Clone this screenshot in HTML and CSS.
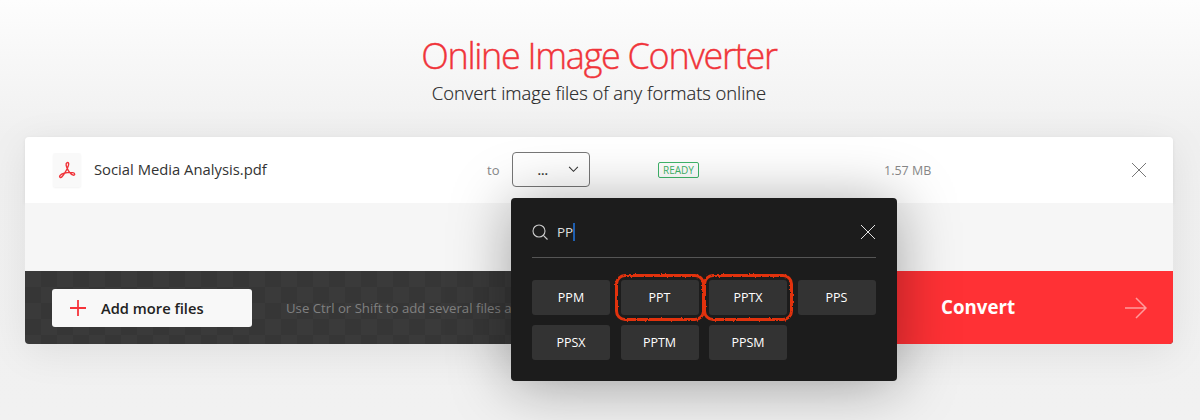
FILE: index.html
```html
<!DOCTYPE html>
<html lang="en">
<head>
    <meta charset="UTF-8">
    <title>Online Image Converter</title>
    <link rel="stylesheet" href="styles.css">
</head>
<body>
    <svg class="defs" width="0" height="0">
        <filter id="rough" x="-10%" y="-10%" width="120%" height="120%">
            <feTurbulence type="fractalNoise" baseFrequency="0.5" numOctaves="2" seed="4"/>
            <feDisplacementMap in="SourceGraphic" scale="2.6"/>
        </filter>
    </svg>

    <header class="intro">
        <h1>Online Image Converter</h1>
        <p>Convert image files of any formats online</p>
    </header>

    <main class="panel">
        <div class="file-row">
            <div class="file-info">
                <span class="file-icon">
                    <svg viewBox="0 0 24 24" width="20" height="20" fill="none" stroke="#f0343a" stroke-width="1.7">
                        <path d="M11 6.5C10.3 2.8 13.8 1.6 14 4.6c.2 3.4-5.4 12.8-8 15.6-1.700 1.800-3.600.2-2.500-1.500 1.600-2.500 9-4.700 15.500-3.500 3 .5 2.700 3.300.4 3-3.400-.5-7.600-7.500-8.400-11.700z"/>
                    </svg>
                </span>
                <span class="file-name">Social Media Analysis.pdf</span>
            </div>
            <div class="target">
                <span class="target-label">to</span>
                <div class="select">
                    <span class="select-value">...</span>
                    <svg viewBox="0 0 12 8" width="11" height="7" fill="none" stroke="#333" stroke-width="1.200"><path d="M1 1l5 5 5-5"/></svg>
                </div>
            </div>
            <div class="status"><span class="badge">READY</span></div>
            <div class="file-size">1.57 MB</div>
            <svg class="close" viewBox="0 0 16 16" width="16" height="16" fill="none" stroke="#777" stroke-width="1"><path d="M1 1l14 14M15 1L1 15"/></svg>
        </div>

        <div class="spacer"></div>

        <div class="action-bar">
            <button class="add-btn">
                <svg viewBox="0 0 16 16" width="16" height="16" fill="none" stroke="#f5333a" stroke-width="1.800"><path d="M8 0v16M0 8h16"/></svg>
                Add more files
            </button>
            <span class="hint">Use Ctrl or Shift to add several files a</span>
            <button class="convert-btn">
                <span class="convert-label">Convert</span>
                <svg viewBox="0 0 22 22" width="22" height="22" fill="none" stroke="#ff9c9c" stroke-width="1.500"><path d="M0 11h21M11 1l10 10-10 10"/></svg>
            </button>
        </div>

        <div class="dropdown">
            <div class="search">
                <svg viewBox="0 0 16 16" width="16" height="16" fill="none" stroke="#ccc" stroke-width="1.100"><circle cx="7" cy="7" r="6"/><path d="M11.300 11.300l4.200 4.200"/></svg>
                <span class="search-text">PP</span><span class="caret"></span>
                <svg class="search-close" viewBox="0 0 16 16" width="16" height="16" fill="none" stroke="#e4e4e4" stroke-width="1"><path d="M1 1l14 14M15 1L1 15"/></svg>
            </div>
            <div class="formats">
                <span class="chip">PPM</span>
                <span class="chip marked">PPT</span>
                <span class="chip marked">PPTX</span>
                <span class="chip">PPS</span>
                <span class="chip">PPSX</span>
                <span class="chip">PPTM</span>
                <span class="chip">PPSM</span>
            </div>
        </div>
    </main>
</body>
</html>
```

FILE: styles.css
```css
* {
    box-sizing: border-box;
}

html, body {
    height: 100%;
}

body {
    margin: 0;
    overflow: hidden;
    font-family: "Open Sans", sans-serif;
    background: linear-gradient(#fdfdfd 0, #f0f0f0 135px, #f1f1f1 100%);
    color: #333;
}

.defs {
    position: absolute;
}

.intro {
    height: 137px;
    padding-top: 33px;
    text-align: center;
}

.intro h1 {
    margin: 0 2px 0 0;
    font-size: 36px;
    font-weight: 300;
    line-height: 46px;
    letter-spacing: -1.300px;
    color: #f0343a;
    -webkit-text-stroke: 0.4px #f0343a;
}

.intro p {
    margin: -1px 2px 0 0;
    font-size: 18.400px;
    font-weight: 300;
    line-height: 30px;
    letter-spacing: -0.050px;
    color: #222;
    -webkit-text-stroke: 0.15px #222;
}

.panel {
    position: relative;
    width: 1148px;
    margin-left: 25px;
    border-radius: 4px;
    box-shadow: 0 8px 40px rgba(0, 0, 0, 0.08);
}

.file-row {
    display: grid;
    grid-template-columns: 435px 171px 226px 247px 16px;
    align-items: center;
    height: 66px;
    padding-left: 27px;
    background: #fff;
    border-radius: 4px 4px 0 0;
    box-shadow: 0 1px 4px rgba(0, 0, 0, 0.06);
}

.file-info {
    display: flex;
    align-items: center;
}

.file-icon {
    display: flex;
    align-items: center;
    justify-content: center;
    width: 28px;
    height: 34px;
    margin: 0 13px 0 1px;
    background: #f9f9f9;
    border-radius: 2px;
    box-shadow: 0 1px 2px rgba(0, 0, 0, 0.05);
}

.file-name {
    margin-bottom: 3px;
    font-size: 14.800px;
    color: #333;
}

.target {
    display: flex;
    align-items: center;
}

.target-label {
    width: 24.500px;
    font-size: 13px;
    color: #888;
}

.select {
    display: flex;
    align-items: center;
    justify-content: space-between;
    width: 78.500px;
    height: 35px;
    margin-bottom: 1px;
    padding: 0 10px 0 25px;
    border: 1px solid #777;
    border-radius: 4px;
}

.select-value {
    font-size: 13px;
    font-weight: 600;
    color: #333;
}

.status {
    display: flex;
}

.badge {
    padding: 0 4px;
    font-size: 10px;
    line-height: 14px;
    color: #3fb56a;
    border: 1px solid #3fb56a;
    border-radius: 2px;
}

.file-size {
    font-size: 12.500px;
    color: #888;
}

.spacer {
    height: 68px;
    background: #f6f6f6;
}

.action-bar {
    display: flex;
    align-items: center;
    height: 73px;
    padding-left: 27px;
    color: #808080;
    background-color: #383838;
    background-image: conic-gradient(#363636 25%, #3a3a3a 0 50%, #363636 0 75%, #3a3a3a 0);
    background-size: 32px 32px;
    border-radius: 0 0 4px 4px;
    overflow: hidden;
}

.add-btn {
    display: flex;
    align-items: center;
    gap: 15px;
    flex: none;
    width: 200px;
    height: 38px;
    padding-left: 18px;
    font: 600 14.700px "Open Sans", sans-serif;
    color: #222;
    background: #f8f8f8;
    border: 0;
    border-radius: 3px;
}

.hint {
    margin-left: 34px;
    font-size: 13.200px;
    white-space: nowrap;
}

.convert-btn {
    display: flex;
    align-items: center;
    justify-content: space-between;
    align-self: stretch;
    width: 373px;
    margin-left: auto;
    padding: 0 26px 0 141px;
    font: 700 18.700px "Open Sans", sans-serif;
    color: #fff;
    background: #ff3135;
    border: 0;
}

.convert-label {
    margin-bottom: 2px;
}

.dropdown {
    position: absolute;
    top: 61px;
    left: 486px;
    width: 386px;
    height: 183px;
    padding: 0 21px;
    background: #1c1c1c;
    border-radius: 4px;
    box-shadow: 0 4px 60px rgba(0, 0, 0, 0.35);
}

.search {
    display: flex;
    align-items: center;
    height: 60px;
    padding-top: 9px;
    margin-bottom: 22px;
    color: #ddd;
    font-size: 13.500px;
    border-bottom: 1px solid #555;
}

.search-text {
    margin-left: 9px;
}

.caret {
    width: 2px;
    height: 18px;
    background: #1f5fb0;
}

.search-close {
    margin-left: auto;
}

.formats {
    display: grid;
    grid-template-columns: repeat(4, 78px);
    grid-auto-rows: 35px;
    gap: 10px 10.500px;
}

.chip {
    position: relative;
    display: flex;
    align-items: center;
    justify-content: center;
    font-size: 12.500px;
    font-weight: 500;
    color: #fff;
    background: #333;
    border-radius: 3px;
}

.chip.marked::after {
    content: "";
    position: absolute;
    inset: -6px;
    border: 3.500px solid #e2320f;
    border-radius: 10px;
    filter: url(#rough);
}
```
